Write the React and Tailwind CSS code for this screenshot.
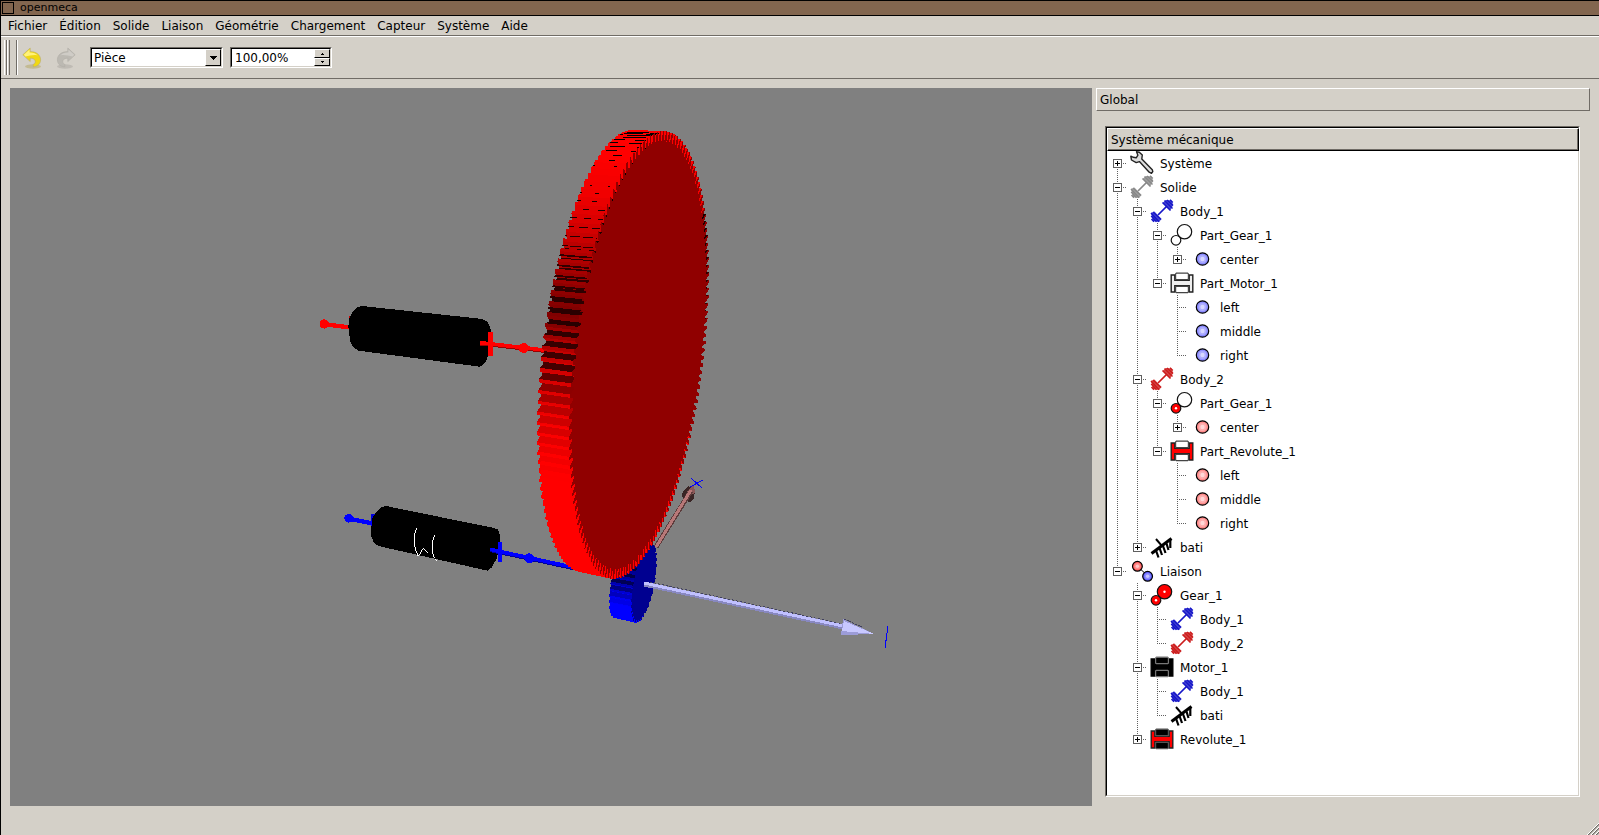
// src/App.jsx
import React, { useState } from "react";

const MENUS = ["Fichier", "Édition", "Solide", "Liaison", "Géométrie", "Chargement", "Capteur", "Système", "Aide"];

const BLUE = "#1616c8";
const RED = "#cc1c1c";

const points = (kind) => [
  { label: "left", icon: kind },
  { label: "middle", icon: kind },
  { label: "right", icon: kind },
];

const TREE = [
  { label: "Système", icon: "wrench", closed: true },
  {
    label: "Solide",
    icon: "bodyGray",
    children: [
      {
        label: "Body_1",
        icon: "bodyBlue",
        children: [
          { label: "Part_Gear_1", icon: "gearEmpty", children: [{ label: "center", icon: "pointBlue", closed: true }] },
          { label: "Part_Motor_1", icon: "rollerEmpty", children: points("pointBlue") },
        ],
      },
      {
        label: "Body_2",
        icon: "bodyRed",
        children: [
          { label: "Part_Gear_1", icon: "gearHalf", children: [{ label: "center", icon: "pointRed", closed: true }] },
          { label: "Part_Revolute_1", icon: "rollerRed", children: points("pointRed") },
        ],
      },
      { label: "bati", icon: "ground", closed: true },
    ],
  },
  {
    label: "Liaison",
    icon: "joint",
    children: [
      {
        label: "Gear_1",
        icon: "gearRed",
        children: [
          { label: "Body_1", icon: "bodyBlue" },
          { label: "Body_2", icon: "bodyRed" },
        ],
      },
      {
        label: "Motor_1",
        icon: "rollerBlack",
        children: [
          { label: "Body_1", icon: "bodyBlue" },
          { label: "bati", icon: "ground" },
        ],
      },
      { label: "Revolute_1", icon: "rollerRedBlack", closed: true },
    ],
  },
];

/* ---------- tree icons ---------- */

const Dumbbell = ({ color }) => (
  <g stroke={color} fill="none">
    <path d="M8 16L17 7" strokeWidth="1.7" />
    <path d="M12.5 4L16 1L21.5 1.5L23.2 6L20 11.5Z" fill={color} fillOpacity=".8" stroke="none" />
    <path d="M1 14L4.5 12.5L11.5 20L9 23L3 22Z" fill={color} fillOpacity=".8" stroke="none" />
    <path d="M12.5 3.5L20.5 11.5M14.5 1.5L22.5 9.5M17 1L23 6.5M20 .8L22.8 3.5" strokeWidth="1.5" />
    <path d="M1 14L9 22.8M3 13L11 20.5M1.2 17L6.5 22.8M1.5 20L4 22.8" strokeWidth="1.5" />
  </g>
);

const Roller = ({ frame, drum, line = "#222", edge = "#444" }) => (
  <g>
    <path
      d="M1.2 4H4.8V9.3H19.2V4H22.8V21H19.2V14.7H4.8V21H1.2Z"
      fill={frame}
      stroke={line}
      strokeWidth="1.4"
    />
    <path d="M6.4 2.2H17.6L18.4 3V7.8L17.6 8.6H6.4L5.6 7.8V3Z" fill={drum} stroke={edge} strokeWidth="1.2" />
    <path d="M6.4 15.4H17.6L18.4 16.2V20.8L17.6 21.6H6.4L5.6 20.8V16.2Z" fill={drum} stroke={edge} strokeWidth="1.2" />
  </g>
);

const Ball = ({ cx = 12.5, cy = 12, r = 6.2, color }) => (
  <g>
    <circle cx={cx} cy={cy} r={r} fill={color} stroke="#000" strokeWidth="1.2" />
    <circle cx={cx} cy={cy} r={r * 0.65} fill="#fff" opacity=".3" />
    <circle cx={cx} cy={cy} r={r * 0.35} fill="#fff" opacity=".5" />
  </g>
);

const Gears = ({ big, small }) => (
  <g stroke="#111" strokeWidth="1.2">
    <circle cx="14.5" cy="8.7" r="7.2" fill={big} />
    <circle cx="6" cy="17.3" r="4.8" fill={small} />
    {big !== "#fff" && <circle cx="14.5" cy="8.7" r="1.2" fill="#fff" stroke="none" />}
    {small !== "#fff" && <circle cx="6" cy="17.3" r="1.2" fill="#fff" stroke="none" />}
  </g>
);

const ICONS = {
  wrench: (
    <path
      d="M.8 5.2L1.5 9L6.2 11.6L9.4 10.6L19.2 21.2L21.5 22.3L22.8 20.6L22.3 18.8L11.8 8L12.3 4L9.3 1.2L6.5 .8L7.9 4.2L6.2 6.8L3.3 6.3Z"
      fill="#dcdcdc"
      stroke="#222"
      strokeWidth="1.4"
      strokeLinejoin="round"
    />
  ),
  bodyGray: <Dumbbell color="#888" />,
  bodyBlue: <Dumbbell color={BLUE} />,
  bodyRed: <Dumbbell color={RED} />,
  gearEmpty: <Gears big="#fff" small="#fff" />,
  gearHalf: <Gears big="#fff" small="#f00" />,
  gearRed: <Gears big="#f00" small="#f00" />,
  rollerEmpty: <Roller frame="#eee" drum="#fff" />,
  rollerRed: <Roller frame="#f00" drum="#fff" />,
  rollerBlack: <Roller frame="#000" drum="#000" line="#000" edge="#777" />,
  rollerRedBlack: <Roller frame="#f00" drum="#000" edge="#555" />,
  pointBlue: <Ball color="#8c8cff" />,
  pointRed: <Ball color="#ff8c8c" />,
  joint: (
    <g>
      <path d="M7 7L18 17" stroke="#000" />
      <Ball cx={7.4} cy={7.3} r={4.9} color="#ff5a5a" />
      <Ball cx={17.6} cy={17.3} r={4.9} color="#5a5aff" />
    </g>
  ),
  ground: (
    <g stroke="#000" fill="none">
      <path d="M1.5 18.5L21.5 3.5" strokeWidth="3" />
      <path d="M6 4L11.7 10.7" strokeWidth="2" />
      <path d="M6 15.5L8.5 22.5M9.5 13L12 20M13 11L15.5 18M16.5 8.5L18.5 15M20.3 4V13" strokeWidth="2.2" />
    </g>
  ),
};

/* ---------- tree ---------- */

const Guide = ({ up, down, right }) => (
  <svg width="20" height="24" className="block" shapeRendering="crispEdges" stroke="#606060" strokeDasharray="1 1" aria-hidden>
    {up && <path d="M10.5 0V12" />}
    {down && <path d="M10.5 12V24" />}
    {right && <path d="M10 12.5H20" />}
  </svg>
);

function Node({ node, last, first, guides }) {
  const [open, setOpen] = useState(!node.closed);
  const branch = node.closed || node.children;

  return (
    <li role="treeitem" aria-expanded={branch ? open : undefined}>
      <div className="flex h-6 items-center">
        {guides.map((g, i) => (
          <Guide key={i} up={g} down={g} />
        ))}
        <div className="relative">
          <Guide up={!first || guides.length > 0} down={!last} right />
          {branch && (
            <button
              type="button"
              onClick={() => setOpen(!open)}
              aria-label={(open ? "Collapse " : "Expand ") + node.label}
              className="absolute left-[6px] top-2 block"
            >
              <svg width="9" height="9" className="block" shapeRendering="crispEdges">
                <rect x=".5" y=".5" width="8" height="8" fill="#fff" stroke="#606060" />
                <path d={open ? "M2 4.5H7" : "M2 4.5H7M4.5 2V7"} stroke="#000" />
              </svg>
            </button>
          )}
        </div>
        <svg width="24" height="24" viewBox="0 0 24 24" className="ml-[3px] shrink-0" aria-hidden>
          {ICONS[node.icon]}
        </svg>
        <span className="ml-[6px] pt-0.5">{node.label}</span>
      </div>
      {open && node.children && (
        <ul role="group">
          {node.children.map((c, i) => (
            <Node key={i} node={c} last={i === node.children.length - 1} guides={[...guides, !last]} />
          ))}
        </ul>
      )}
    </li>
  );
}

/* ---------- 3D scene ---------- */

const channel = (stops, y) => {
  if (y <= stops[0][0]) return stops[0][1];
  for (let i = 1; i < stops.length; i++) {
    const [y1, v1] = stops[i];
    const [y0, v0] = stops[i - 1];
    if (y <= y1) return Math.round(v0 + ((v1 - v0) * (y - y0)) / (y1 - y0));
  }
  return stops[stops.length - 1][1];
};

// light and shadow sides of a tooth, by height on the wheel
const RED_LIT = [[160, 255], [200, 240], [230, 215], [260, 180], [300, 140], [325, 125], [345, 165], [370, 205], [400, 225], [440, 250], [470, 255]];
const RED_DIM = [[130, 0], [210, 20], [270, 50], [330, 40], [380, 70], [400, 150], [430, 205], [465, 240], [490, 255]];
const BLUE_LIT = [[560, 130], [585, 160], [600, 235], [610, 255]];
const BLUE_DIM = [[560, 40], [590, 90], [603, 200], [612, 255]];

function Wheel({ cx, cy, rx, ry, rho, teeth, depth, dx, dyTop, dyBottom, lit, dim, paint, face, groovesTo, warp }) {
  const k = Math.sqrt(1 - rho * rho);
  const at = (u, r) => {
    // teeth nearer to the eye (upper left) are spaced wider
    const t = u + warp * Math.sin(u + 2.4);
    const c = Math.cos(t);
    const s = Math.sin(t);
    return [cx + rx * r * c, cy + ry * r * (k * s - rho * c)];
  };
  const back = ([x, y]) => {
    const f = (y - (cy - ry)) / (2 * ry);
    return [x + dx, y + dyTop + (dyBottom - dyTop) * f];
  };
  const str = (pts) => pts.map((p) => p[0].toFixed(1) + "," + p[1].toFixed(1)).join(" ");

  const step = (2 * Math.PI) / teeth;
  const quads = [];
  const grooves = [];
  const outline = [];
  for (let i = 0; i < teeth; i++) {
    const t = -Math.PI / 2 + i * step;
    const tip0 = at(t, 1);
    const tip1 = at(t + step * 0.3, 1);
    const low0 = at(t + step * 0.55, depth);
    const low1 = at(t + step * 0.8, depth);
    const next = at(t + step, 1);
    outline.push(tip0, tip1, low0, low1);

    const y = tip0[1];
    const upperRight = tip0[0] > cx + rx * 0.3 && y < cy - ry * 0.65;
    const right = tip0[0] > cx + rx * 0.75 && !upperRight;
    const l = paint(channel(right ? dim : lit, y));
    const d = paint(channel(upperRight ? lit : dim, y));
    quads.push({ y, pts: [low1, next, back(next), back(low1)], fill: l });
    quads.push({ y: y - 0.1, pts: [tip1, low0, back(low0), back(tip1)], fill: d });
    quads.push({ y: y - 0.2, pts: [low0, low1, back(low1), back(low0)], fill: d });
    quads.push({ y: y + 0.1, pts: [tip0, tip1, back(tip1), back(tip0)], fill: l });

    // shadow gap above each tooth on the upper left rim
    if (y < groovesTo && tip0[0] < cx + rx * 0.3) {
      const a = at(t + step * 0.6, 0.995);
      const b = at(t + step * (y < 260 ? 0.73 : 0.8), 0.99);
      grooves.push({ pts: [a, b, back(b), back(a)], fill: paint(channel(dim, y)) });
    }
  }
  quads.sort((a, b) => a.y - b.y);

  return (
    <g>
      {quads.concat(grooves).map((q, i) => (
        <polygon key={i} points={str(q.pts)} fill={q.fill} />
      ))}
      <polygon points={str(outline)} fill={face} />
    </g>
  );
}

const Scene = () => (
  <svg
    viewBox="10 88 1082 718"
    preserveAspectRatio="xMidYMid slice"
    className="block size-full"
    shapeRendering="crispEdges"
    role="img"
    aria-label="Vue 3D"
  >
    {/* shafts and bearings */}
    <g transform="translate(310 290) scale(.33333)">
      <path d="M118 78h10v20h-10z" fill="#c00" />
      <path d="M43 103L120 112" stroke="#f00" strokeWidth="13" />
      <circle cx="43" cy="102" r="14" fill="#f00" />
      <path
        d="M115 108L119 82L130 62L142 52L156 48L518 87L532 96L541 112L544 135L540 175L530 210L518 226L508 230L145 182L130 172L120 152Z"
        fill="#000"
      />
      <path d="M510 159L720 183" stroke="#f00" strokeWidth="13" />
      <path d="M510 165L720 189" stroke="#900" strokeWidth="3" />
      <path d="M543 126V197" stroke="#f00" strokeWidth="15" />
      <circle cx="641" cy="174" r="15" fill="#f00" />

      <path d="M184 672h12v24h-12z" fill="#00d" />
      <path d="M116 686L190 701" stroke="#00f" strokeWidth="13" />
      <circle cx="116" cy="685" r="13" fill="#00f" />
      <path
        d="M184 712L187 686L198 666L212 653L228 648L552 714L564 719L570 735L569 768L560 805L546 832L532 842L205 768L192 758L184 740Z"
        fill="#000"
      />
      <path d="M540 779L790 833" stroke="#00f" strokeWidth="13" />
      <path d="M540 785L790 839" stroke="#009" strokeWidth="3" />
      <path d="M571 755V815" stroke="#00f" strokeWidth="13" />
      <circle cx="658" cy="805" r="15" fill="#00f" />
      <g fill="none" stroke="#fff" strokeWidth="3">
        <path d="M320 714Q313 728 313 755T325 799L340 775L353 788" />
        <path d="M374 735Q367 748 367 775T380 811" />
      </g>
    </g>

    {/* y axis */}
    <path d="M683 491L688 486L695 489L694 499L690 502L685 501L682 496Z" fill="#3a2525" />
    <path d="M694 485L695 493L690 496L686 492Z" fill="#8a5858" />
    <path d="M656 547L691 491" stroke="#5e3c3c" strokeWidth="5" />
    <path d="M656 547L691 490" stroke="#b87878" strokeWidth="3" />
    <path d="M691 478L702 488M690 487L703 480" stroke="#00f" />

    <Wheel
      cx={644} cy={583} rx={13} ry={40} rho={0.55} teeth={34} depth={0.93}
      dx={-22} dyTop={-3} dyBottom={-5} groovesTo={0} warp={0}
      lit={BLUE_LIT} dim={BLUE_DIM} paint={(v) => `rgb(0,0,${v})`} face="#000090"
    />
    <Wheel
      cx={639} cy={355} rx={70} ry={224} rho={0.357} teeth={150} depth={0.955}
      dx={-32} dyTop={-1} dyBottom={-7} groovesTo={325} warp={0.22}
      lit={RED_LIT} dim={RED_DIM} paint={(v) => `rgb(${v},0,0)`} face="#900000"
    />

    {/* x axis */}
    <path d="M650 582L843 624" stroke="#404060" strokeDasharray="2 2" />
    <path d="M644 584L843 627" stroke="#8888c0" strokeWidth="5" />
    <path d="M644 583L843 626" stroke="#c0c0ff" strokeWidth="3" />
    <path d="M843 619L874 634L841 635Z" fill="#9c9cd8" />
    <path d="M844 621L874 634L842 631Z" fill="#c8c8ff" />
    <path d="M844 619L862 627" stroke="#404060" strokeDasharray="2 1" />
    <path d="M888 626L885 648" stroke="#00f" />
  </svg>
);

/* ---------- toolbar ---------- */

const UndoArrow = ({ light, dark, shade }) => (
  <g>
    <ellipse cx="11" cy="19.5" rx="8" ry="2.2" fill={shade} opacity=".6" />
    <path d="M.8 7.8L8.2 1V4.6C14.5 4.6 18.6 8 18.6 12.8C18.6 17 15.5 19.6 11.2 19.8V17.4C14.2 16.4 14.4 11.2 8.2 11.2V14.6Z" fill={dark} stroke={shade} strokeWidth=".6" />
    <path d="M1.8 7.8L7.6 2.5V5.4C11 5.2 14 6.4 15.6 8.4C12 7.4 8 8.6 3.4 9.4Z" fill={light} />
  </g>
);

const sunken = "border border-t-[#706c66] border-l-[#706c66] border-b-white border-r-white";
const inner = "border border-t-black border-l-black border-b-[#d4d0c8] border-r-[#d4d0c8]";
const raised = "border border-t-white border-l-white border-b-black border-r-black bg-[#d4d0c8]";

const Toolbar = () => {
  const [zoom, setZoom] = useState("100,00%");
  return (
    <div className="flex h-[43px] items-center border-b border-[#706c66] border-t border-t-white pl-[3px]">
      <div className="flex h-[35px] w-[6px]">
        <span className="w-[3px] border-l border-r border-l-white border-r-[#706c66]" />
        <span className="w-[3px] border-l border-r border-l-white border-r-[#706c66]" />
      </div>
      <span className="ml-[6px] h-[35px] w-[2px] border-l border-r border-l-[#706c66] border-r-white" />
      <button type="button" aria-label="Annuler" className="ml-1">
        <svg width="22" height="22" viewBox="0 0 22 22" className="block">
          <UndoArrow light="#fff27a" dark="#f0d814" shade="#b8ac70" />
        </svg>
      </button>
      <button type="button" aria-label="Rétablir" disabled className="ml-3">
        <svg width="22" height="22" viewBox="0 0 22 22" className="block">
          <g transform="translate(20 0) scale(-1 1)">
            <UndoArrow light="#cfccc6" dark="#bcb9b2" shade="#b0ada6" />
          </g>
        </svg>
      </button>

      <div className={"relative ml-3 w-[133px] " + sunken}>
        <div className={"bg-white " + inner}>
          <select aria-label="Type" className="block h-[17px] w-full appearance-none bg-transparent pl-[2px] outline-none">
            <option>Pièce</option>
          </select>
        </div>
        <span className={"pointer-events-none absolute right-px top-px flex h-[17px] w-4 items-center justify-center " + raised}>
          <svg width="7" height="4" shapeRendering="crispEdges">
            <path d="M0 0H7L3.5 4Z" />
          </svg>
        </span>
      </div>

      <div className={"ml-[7px] w-[102px] " + sunken}>
        <div className={"flex bg-white " + inner}>
          <input
            aria-label="Échelle"
            value={zoom}
            onChange={(e) => setZoom(e.target.value)}
            className="block h-[17px] w-0 flex-1 bg-transparent pl-[3px] outline-none"
          />
          <div className="flex w-4 flex-col">
            <button type="button" aria-label="Augmenter" className={"flex h-[9px] items-center justify-center " + raised}>
              <svg width="3" height="2" shapeRendering="crispEdges"><path d="M1 0H2V1H3V2H0V1H1Z" /></svg>
            </button>
            <button type="button" aria-label="Diminuer" className={"flex h-2 items-center justify-center " + raised}>
              <svg width="3" height="2" shapeRendering="crispEdges"><path d="M0 0H3V1H2V2H1V1H0Z" /></svg>
            </button>
          </div>
        </div>
      </div>
    </div>
  );
};

export default function App() {
  return (
    <div className="flex h-screen flex-col border-l border-t border-black bg-[#d4d0c8] font-['DejaVu_Sans',sans-serif] text-[12px] leading-4 text-black">
      {/* Title bar */}
      <header className="flex h-[15px] shrink-0 items-center border-b border-black bg-[#82664f] pl-px">
        <span className="h-3 w-3 border border-black" />
        <h1 className="ml-[6px] text-[11px] leading-4">openmeca</h1>
      </header>

      {/* Menu bar */}
      <nav className="flex h-5 shrink-0 items-center border-b border-[#706c66] pl-px">
        {MENUS.map((m) => (
          <button key={m} type="button" className="px-[6px]">
            {m}
          </button>
        ))}
      </nav>

      <Toolbar />

      <main className="flex min-h-0 flex-1 gap-1 pl-[9px] pr-[9px] pt-[9px]">
        <div className="mb-[29px] min-w-0 flex-1 bg-[#808080]">
          <Scene />
        </div>

        <aside className="mb-[29px] flex w-[494px] shrink-0 flex-col">
          <h2 className="h-[23px] border border-b-[#706c66] border-l-white border-r-[#706c66] border-t-white pl-[3px] leading-[23px]">
            Global
          </h2>
          <div className={"mb-[9px] ml-[9px] mr-[10px] mt-[15px] flex min-h-0 flex-1 flex-col " + sunken}>
            <div className={"flex min-h-0 flex-1 flex-col bg-white " + inner}>
              <div className={"-mr-px h-[23px] shrink-0 pl-[3px] leading-[22px] shadow-[inset_-1px_-1px_0_#706c66] " + raised}>
                Système mécanique
              </div>
              <ul role="tree" className="min-h-0 flex-1 overflow-hidden">
                {TREE.map((n, i) => (
                  <Node key={n.label} node={n} first={i === 0} last={i === TREE.length - 1} guides={[]} />
                ))}
              </ul>
            </div>
          </div>
        </aside>
      </main>

      {/* Resize grip */}
      <svg width="12" height="12" className="absolute bottom-0 right-0" aria-hidden>
        <g stroke="#706c66" strokeWidth="1.4">
          <path d="M1 12L12 1M5 12L12 5M9 12L12 9" />
        </g>
        <path d="M0 12L12 0M4 12L12 4M8 12L12 8" stroke="#fff" />
      </svg>
    </div>
  );
}
